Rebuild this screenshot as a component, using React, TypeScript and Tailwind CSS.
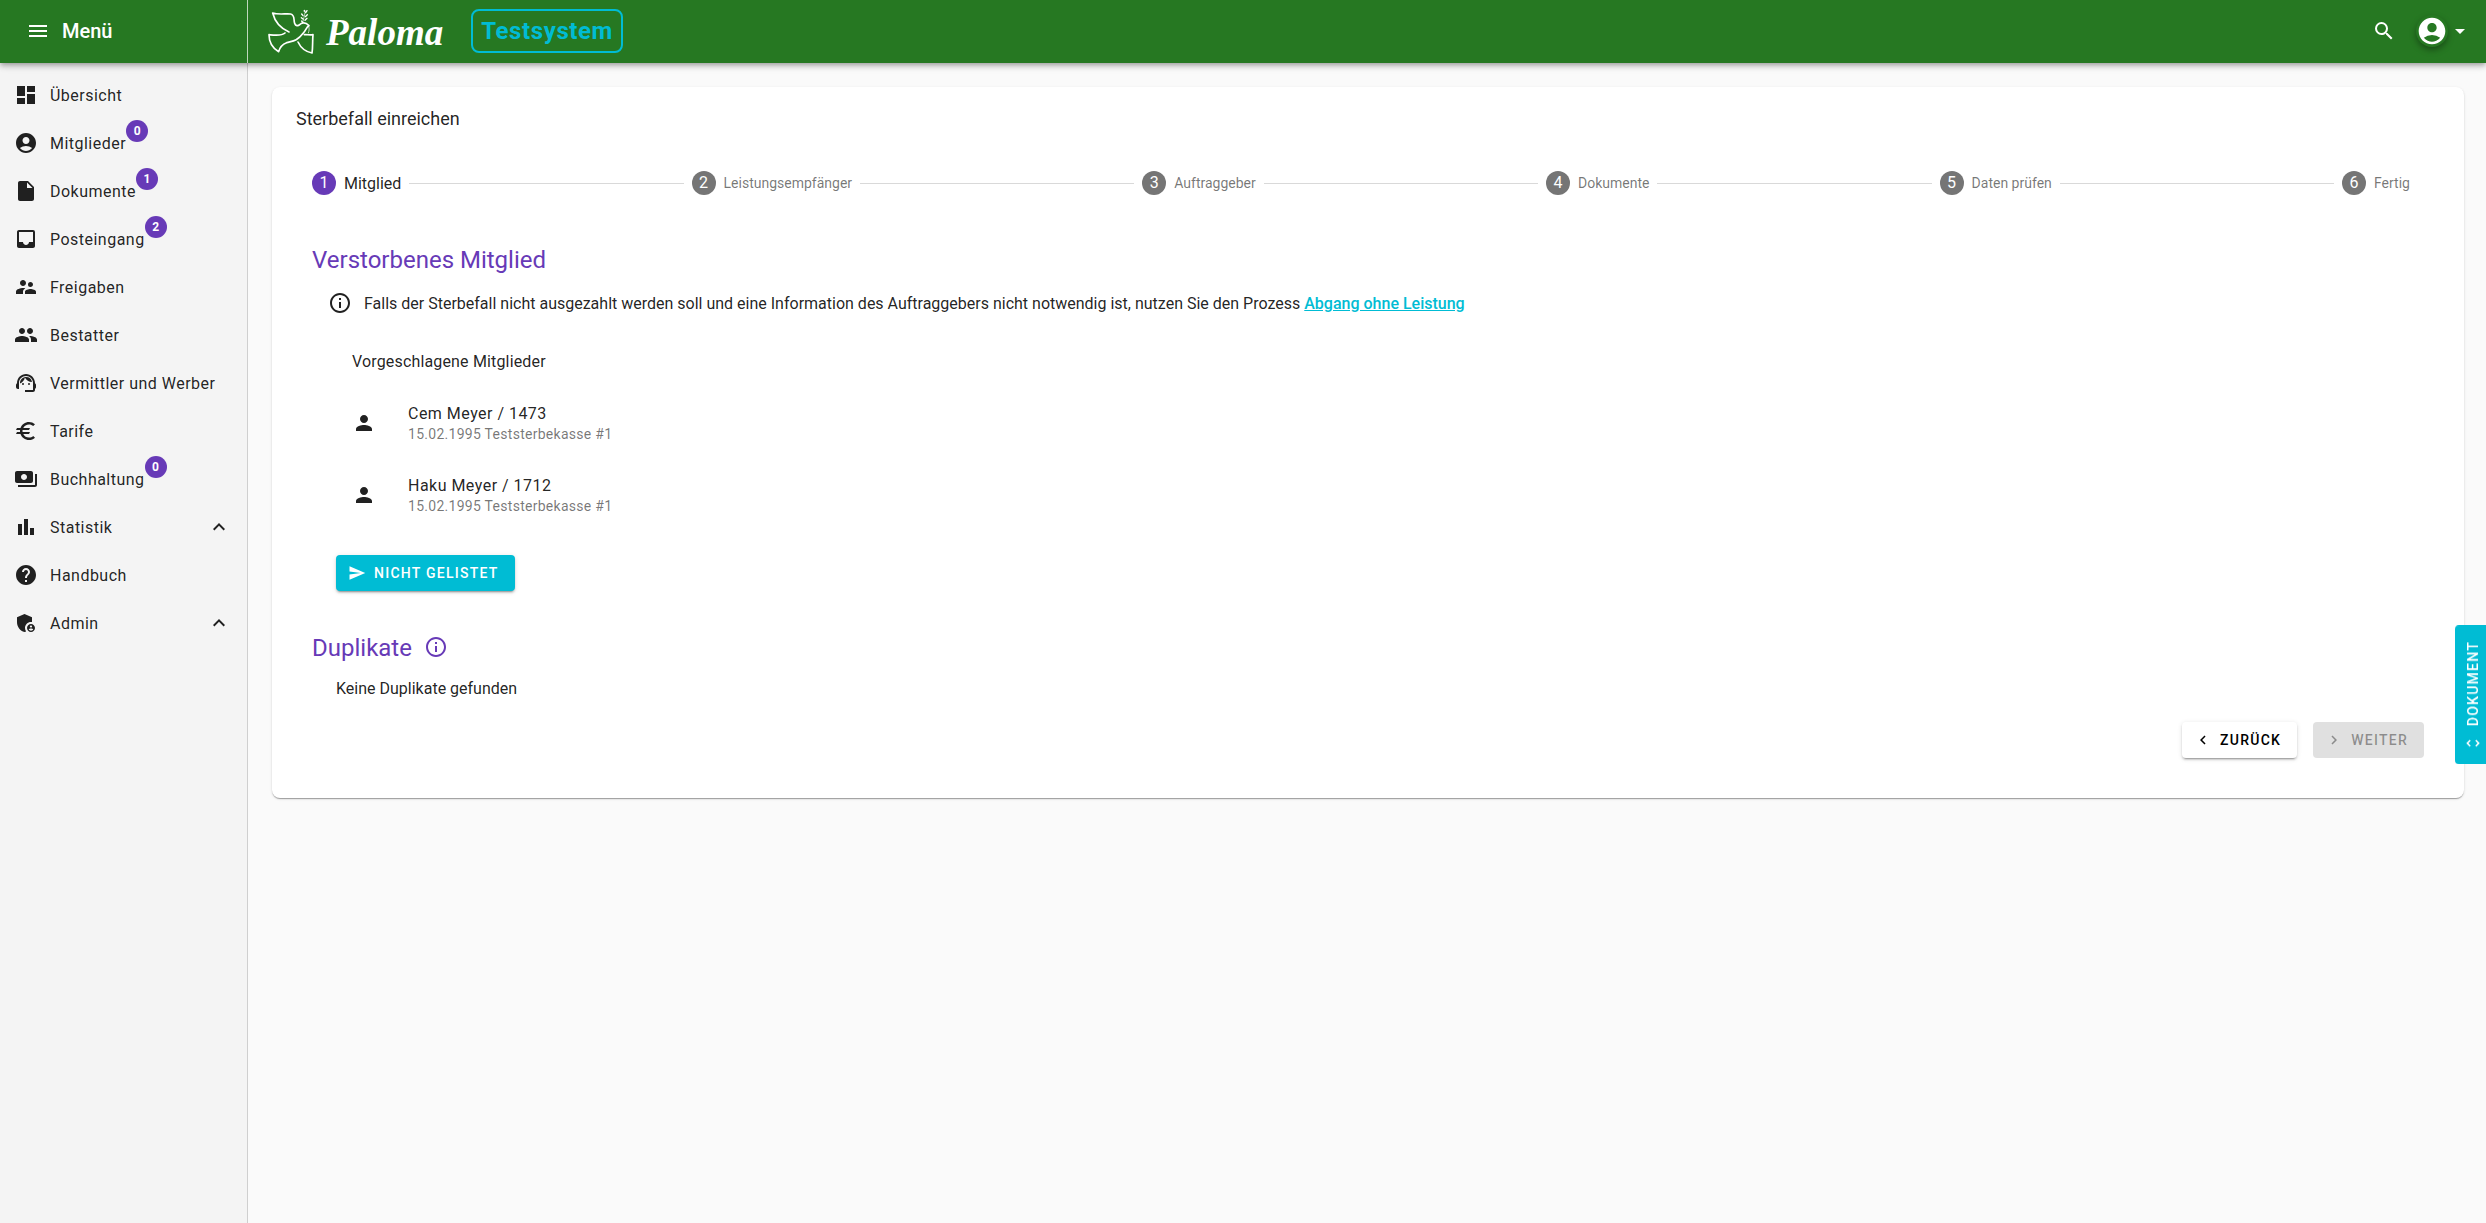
import React from "react";
import type { IconType } from "react-icons";
import {
  MdAccountCircle,
  MdAdminPanelSettings,
  MdArrowDropDown,
  MdBarChart,
  MdChevronLeft,
  MdChevronRight,
  MdDashboard,
  MdEuro,
  MdExpandLess,
  MdHelp,
  MdInbox,
  MdInfoOutline,
  MdInsertDriveFile,
  MdMenu,
  MdPayments,
  MdPeople,
  MdPerson,
  MdSearch,
  MdSend,
  MdSupervisorAccount,
  MdSupportAgent,
  MdUnfoldMore,
} from "react-icons/md";

interface NavItem {
  label: string;
  icon: IconType;
  badge?: number;
  expandable?: boolean;
}

const navItems: NavItem[] = [
  { label: "Übersicht", icon: MdDashboard },
  { label: "Mitglieder", icon: MdAccountCircle, badge: 0 },
  { label: "Dokumente", icon: MdInsertDriveFile, badge: 1 },
  { label: "Posteingang", icon: MdInbox, badge: 2 },
  { label: "Freigaben", icon: MdSupervisorAccount },
  { label: "Bestatter", icon: MdPeople },
  { label: "Vermittler und Werber", icon: MdSupportAgent },
  { label: "Tarife", icon: MdEuro },
  { label: "Buchhaltung", icon: MdPayments, badge: 0 },
  { label: "Statistik", icon: MdBarChart, expandable: true },
  { label: "Handbuch", icon: MdHelp },
  { label: "Admin", icon: MdAdminPanelSettings, expandable: true },
];

const steps = ["Mitglied", "Leistungsempfänger", "Auftraggeber", "Dokumente", "Daten prüfen", "Fertig"];

const members = [
  { name: "Cem Meyer / 1473", info: "15.02.1995 Teststerbekasse #1" },
  { name: "Haku Meyer / 1712", info: "15.02.1995 Teststerbekasse #1" },
];

function DoveLogo() {
  return (
    <svg
      viewBox="54 26 138 135"
      className="h-[45px] w-[46px]"
      fill="none"
      stroke="white"
      strokeWidth="5"
      strokeLinecap="round"
      strokeLinejoin="round"
      aria-hidden="true"
    >
      <path d="M117 95C92 84 74 62 68 38c18 6 40 1 54 3 14 4 8 18 12 28 3 8 10 9 15 4 8-7 19-6 28 3-8 4-8 12-17 22-20 26-32 24-50 29-11 4-21 15-24 27-20-12-29-30-29-51 18 2 37 5 48-5" />
      <path d="M163 103c8-1 16 2 26 0-2 20 0 36-3 55-20-4-34-16-42-33" />
      <path d="M176 78c3 8 1 14-1 20" strokeWidth="2" />
      <path d="M157 70c4-12 6-24 9-38" strokeWidth="2" />
      <path d="M155 41l4 5M171 31l-4 6M154 52l5 4M172 43l-6 6M155 62l3 4M171 54l-6 6M163 30v3" strokeWidth="4" />
    </svg>
  );
}

function Header() {
  return (
    <header className="relative z-10 flex h-[63px] items-stretch bg-[#267822] text-white shadow-[0_2px_4px_-1px_rgba(0,0,0,0.2),0_4px_5px_0_rgba(0,0,0,0.14),0_1px_10px_0_rgba(0,0,0,0.12)]">
      <div className="flex w-62 shrink-0 items-center border-r border-white/70 pb-px pl-[26px]">
        <button className="flex items-center gap-3 text-xl font-medium">
          <MdMenu className="size-6" />
          Menü
        </button>
      </div>
      <div className="flex flex-1 items-center pr-[14px] pb-px pl-5">
        <a href="#" className="flex items-center gap-3">
          <DoveLogo />
          <span className="pt-1 font-['Liberation_Serif',serif] text-[37px] leading-10 font-bold italic">Paloma</span>
        </a>
        <span className="ml-7 flex h-11 items-center rounded-lg border-2 border-[#00bcd4] px-2 text-2xl font-bold tracking-wide text-[#00bcd4]">
          Testsystem
        </span>
        <button className="ml-auto" aria-label="Suchen">
          <MdSearch className="size-6" />
        </button>
        <button className="ml-5 flex items-center" aria-label="Benutzerkonto">
          <span className="rounded-full shadow-[0_3px_6px_rgba(0,0,0,0.35)]">
            <MdAccountCircle className="size-8" />
          </span>
          <MdArrowDropDown className="size-6" />
        </button>
      </div>
    </header>
  );
}

function Sidebar() {
  return (
    <nav className="w-62 shrink-0 border-r border-black/15 bg-[#f4f4f4] pt-2">
      {navItems.map(({ label, icon: Icon, badge, expandable }) => (
        <a key={label} href="#" className="flex h-12 items-center gap-3 pr-4 pl-[14px] tracking-[0.03em]">
          <Icon className="size-6 shrink-0" />
          <span className="relative pt-0.5">
            {label}
            {badge !== undefined && (
              <span className="absolute bottom-[14px] left-full flex size-[22px] items-center justify-center rounded-full bg-[#673ab7] text-xs font-bold tracking-normal text-white">
                {badge}
              </span>
            )}
          </span>
          {expandable && <MdExpandLess className="ml-auto size-6" />}
        </a>
      ))}
    </nav>
  );
}

function Stepper() {
  return (
    <ol className="mt-3 flex h-18 items-center gap-2 pr-[14px]">
      {steps.map((step, index) => (
        <React.Fragment key={step}>
          {index > 0 && <li aria-hidden="true" className="h-px flex-1 bg-black/15" />}
          <li className="flex items-center gap-2">
            <span
              className={`flex size-6 items-center justify-center rounded-full text-base text-white ${
                index === 0 ? "bg-[#673ab7]" : "bg-[#757575]"
              }`}
            >
              {index + 1}
            </span>
            <span className={index === 0 ? "pt-0.5" : "text-sm text-black/54"}>{step}</span>
          </li>
        </React.Fragment>
      ))}
    </ol>
  );
}

const raised = "shadow-[0_3px_1px_-2px_rgba(0,0,0,0.2),0_2px_2px_0_rgba(0,0,0,0.14),0_1px_5px_0_rgba(0,0,0,0.12)]";
const button = "inline-flex h-9 items-center gap-2 rounded pr-4 pl-3 text-sm font-medium uppercase tracking-[0.09em]";

export default function App() {
  return (
    <div className="flex min-h-screen flex-col bg-[#fafafa] font-['Roboto',sans-serif] text-base text-black/87">
      <Header />
      <div className="flex flex-1">
        <Sidebar />
        <main className="min-w-0 flex-1 pt-6 pr-[22px] pb-6 pl-6">
          <section className="rounded-lg bg-white px-10 pt-4 pb-10 shadow-[0_2px_1px_-1px_rgba(0,0,0,0.2),0_1px_1px_0_rgba(0,0,0,0.14),0_1px_3px_0_rgba(0,0,0,0.12)]">
            <h1 className="-ml-4 text-lg leading-8">Sterbefall einreichen</h1>
            <Stepper />

            <h2 className="mt-[25px] text-2xl text-[#673ab7]">Verstorbenes Mitglied</h2>
            <p className="mt-[14px] ml-4 flex items-center gap-3">
              <MdInfoOutline className="size-6" />
              <span className="pt-0.5">
                Falls der Sterbefall nicht ausgezahlt werden soll und eine Information des Auftraggebers nicht notwendig ist, nutzen Sie den Prozess{" "}
                <a href="#" className="font-medium text-[#00bcd4] underline">
                  Abgang ohne Leistung
                </a>
              </span>
            </p>

            <h3 className="mt-[34px] ml-10 tracking-[0.01em]">Vorgeschlagene Mitglieder</h3>
            <ul className="mt-[13px] ml-10">
              {members.map((member) => (
                <li key={member.name}>
                  <button className="flex h-18 items-center gap-8 text-left">
                    <MdPerson className="size-6" />
                    <span className="flex flex-col pt-0.5">
                      <span className="leading-5 tracking-[0.03em]">{member.name}</span>
                      <span className="text-sm tracking-[0.02em] text-black/54">{member.info}</span>
                    </span>
                  </button>
                </li>
              ))}
            </ul>
            <button className={`mt-6 ml-6 bg-[#00bcd4] text-white ${button} ${raised}`}>
              <MdSend className="size-[18px]" />
              Nicht gelistet
            </button>

            <h2 className="mt-[39px] flex items-center gap-3 text-2xl text-[#673ab7]">
              <span className="pt-0.5">Duplikate</span>
              <MdInfoOutline className="size-6" />
            </h2>
            <p className="mt-[13px] ml-6">Keine Duplikate gefunden</p>

            <div className="mt-[21px] flex justify-end gap-4">
              <button className={`bg-white text-black ${button} ${raised}`}>
                <MdChevronLeft className="size-[18px]" />
                Zurück
              </button>
              <button disabled className={`bg-[#e0e0e0] text-black/38 ${button}`}>
                <MdChevronRight className="size-[18px]" />
                Weiter
              </button>
            </div>
          </section>
        </main>
      </div>

      <button className="fixed top-[625px] -right-[5px] z-20 flex w-9 rotate-180 items-center gap-2 rounded bg-[#00bcd4] pt-3 pb-4 text-sm font-medium tracking-[0.09em] text-white uppercase [writing-mode:vertical-rl]">
        <MdUnfoldMore className="size-[18px] rotate-90" />
        Dokument
      </button>
    </div>
  );
}
